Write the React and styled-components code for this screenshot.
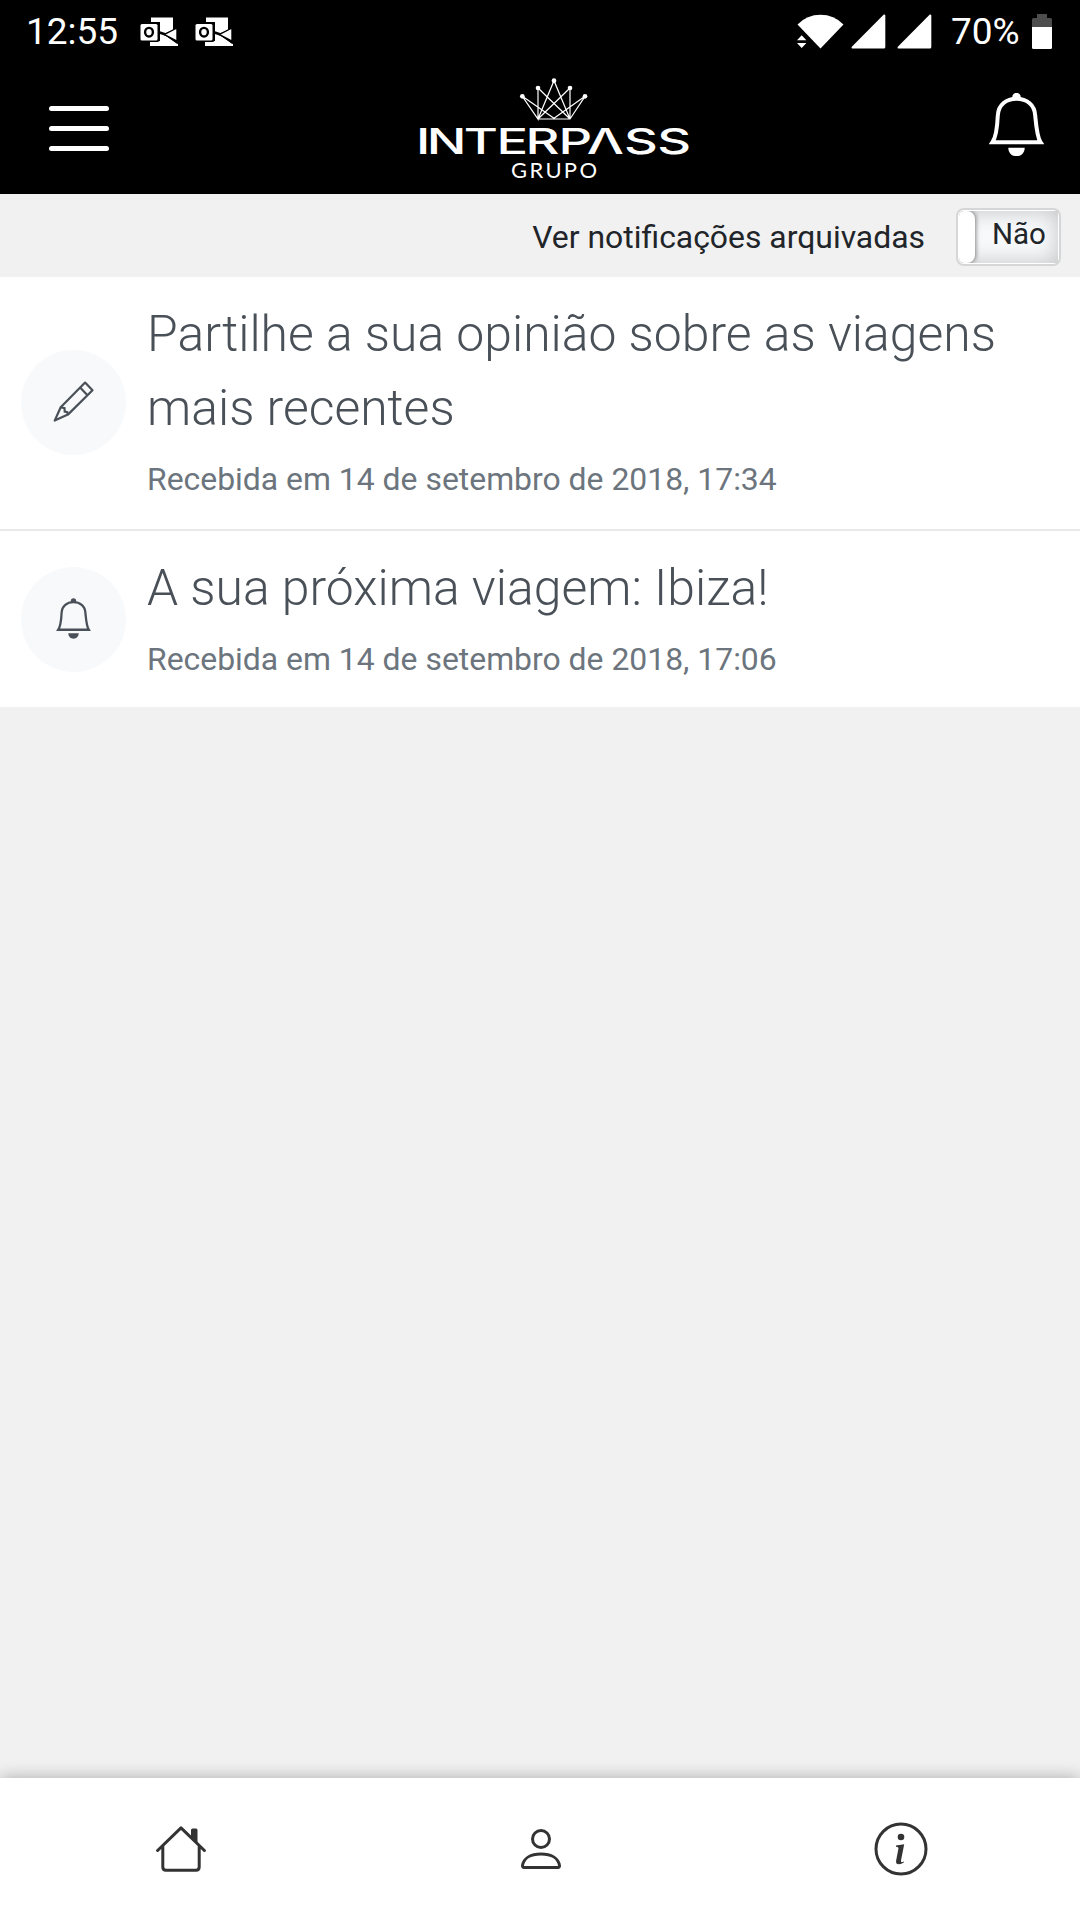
import styled, { createGlobalStyle } from 'styled-components'

const GlobalStyle = createGlobalStyle`
  * {
    box-sizing: border-box;
  }
  body {
    margin: 0;
    background: #f1f1f1;
    font-family: Roboto, "Liberation Sans", sans-serif;
    color: #212529;
  }
  svg {
    display: block;
    flex: none;
  }
`

const Screen = styled.div`
  display: flex;
  flex-direction: column;
  width: 1080px;
  height: 1920px;
  overflow: hidden;
  background: #f1f1f1;
`

const StatusBar = styled.div`
  display: flex;
  justify-content: space-between;
  height: 63px;
  padding: 0 28px 0 26px;
  background: #000;
  color: #fff;
`

const StatusGroup = styled.div`
  display: flex;
  align-items: center;
  height: 63px;
`

const StatusText = styled.span`
  width: ${props => props.$width}px;
  margin-left: ${props => props.$left || 0}px;
  font-size: 37px;
  line-height: 63px;
  white-space: nowrap;
`

const StatusIcon = styled.svg`
  margin-left: ${props => props.$left || 0}px;
`

const AppBar = styled.header`
  display: flex;
  justify-content: space-between;
  height: 131px;
  padding: 0 36px 0 48px;
  background: #000;
  color: #fff;
`

const MenuButton = styled.div`
  display: flex;
  flex-direction: column;
  gap: 15px;
  width: 61px;
  padding: 43px 0 0 0.5px;
`

const MenuLine = styled.span`
  height: 5px;
  border-radius: 3px;
  background: #fff;
`

const BellButton = styled.div`
  padding-top: 30px;
`

const Logo = styled.svg`
  margin-left: 32px;
`

const FilterBar = styled.div`
  display: flex;
  align-items: center;
  justify-content: flex-end;
  gap: 31px;
  height: 83px;
  padding-right: 19px;
  font-size: 31.9px;
`

const FilterLabel = styled.span`
  padding-top: 3px;
`

const Toggle = styled.div`
  display: flex;
  width: 105px;
  height: 58px;
  margin-top: 3px;
  padding: 1px;
  border: 2px solid #d5d6d8;
  border-radius: 8px;
  background: #fff;
`

const ToggleTrack = styled.div`
  display: flex;
  flex: 1;
  overflow: hidden;
  border-radius: 5px 0 0 5px;
  background: #f8f9fa;
  box-shadow: inset 0 0 22px rgba(0, 0, 0, 0.22);
`

const ToggleKnob = styled.span`
  width: 16px;
  border-radius: 5px 8px 8px 5px;
  background: #fff;
  box-shadow: 1px 0 4px rgba(0, 0, 0, 0.45);
`

const ToggleText = styled.span`
  padding-left: 17px;
  font-size: 29.5px;
  line-height: 47px;
`

const List = styled.main`
  display: flex;
  flex-direction: column;
  flex: 1;
`

const Avatar = styled.div`
  display: flex;
  flex: none;
  align-items: center;
  justify-content: center;
  width: 105px;
  height: 105px;
  padding-bottom: 2px;
  border-radius: 50%;
  background: #f8f9fb;
  color: #495057;
`

const ItemText = styled.div`
  padding-bottom: 4px;
`

const Item = styled.article`
  display: flex;
  align-items: center;
  gap: 21px;
  height: ${props => props.$height}px;
  padding-left: 21px;
  background: #fff;

  & + & {
    border-top: 2px solid #e9e9e9;
  }
  &:first-child ${Avatar} {
    margin-bottom: 1px;
  }
  &:first-child ${ItemText} {
    padding-bottom: 6px;
  }
`

const Title = styled.h2`
  width: 890px;
  margin: 0;
  font-size: 49.87px;
  font-weight: 300;
  line-height: 74px;
  color: #495057;
`

const Received = styled.p`
  margin: 11px 0 0;
  font-size: 31.9px;
  line-height: 47px;
  color: #6c757d;
`

const TabBar = styled.nav`
  display: grid;
  grid-template-columns: repeat(3, 1fr);
  height: 142px;
  background: #fff;
  box-shadow: 0 0 16px rgba(0, 0, 0, 0.3);
`

const Tab = styled.div`
  display: flex;
  align-items: center;
  justify-content: center;
  padding: 0 0 0 1px;
  color: #333;
`

function OutlookIcon({ left }) {
  return (
    <StatusIcon $left={left} width="38" height="30" viewBox="0 0 38 30">
      <path d="M11 0.5H33V13L23 17L38 27V29H10V24H20V5H11Z" fill="#fff" />
      <path d="M18 15L27 18L38 26" fill="none" stroke="#000" strokeWidth="2.6" />
      <path d="M24.5 17.5L37 11V24Z" fill="#fff" stroke="#000" strokeWidth="1.4" />
      <rect x="-1" y="5" width="21" height="20" rx="3" fill="#000" />
      <rect x="0.5" y="7" width="17" height="16.5" rx="1.5" fill="#fff" />
      <ellipse cx="9" cy="15.2" rx="3.9" ry="4.3" fill="none" stroke="#000" strokeWidth="2.4" />
    </StatusIcon>
  )
}

function WifiIcon() {
  return (
    <StatusIcon width="47" height="35" viewBox="0 0 47 35">
      <path d="M0.5 10.5Q10 0.8 23.5 0.8T46.5 10.5L23.5 34.5Z" fill="#fff" />
      <path d="M0 26.2L4.7 21.2L9.4 26.2ZM0 29L4.7 34L9.4 29Z" fill="#fff" />
    </StatusIcon>
  )
}

function SignalIcon({ left }) {
  return (
    <StatusIcon $left={left} width="35" height="35" viewBox="0 0 35 35">
      <path d="M32.8 0.5Q34.3 0 34.3 1.5V33Q34.3 34.5 32.8 34.5H1.2Q0 34.5 0.8 32.8Z" fill="#fff" />
    </StatusIcon>
  )
}

function BatteryIcon() {
  return (
    <StatusIcon width="20" height="35" viewBox="0 0 20 35">
      <path d="M0 13V5.5Q0 4 1.5 4H5V0H15V4H18.5Q20 4 20 5.5V13Z" fill="#4d4d4d" />
      <path d="M0 13H20V33.5Q20 35 18.5 35H1.5Q0 35 0 33.5Z" fill="#fff" />
    </StatusIcon>
  )
}

function BellIcon({ width, height, stroke }) {
  return (
    <svg width={width} height={height} viewBox="0 0 55 63">
      <path
        d="M3.5 49.2H51.5C48 44 47.3 34 46.2 22.5C45.6 11.5 37.5 5.8 27.5 5.8S9.4 11.5 8.8 22.5C8.3 34 7 44 3.5 49.2Z"
        fill="none"
        stroke="currentColor"
        strokeWidth={stroke}
      />
      <path d="M23.3 5.5V4A4.2 4.2 0 0 1 31.7 4V5.5ZM19.3 54.7H35.7C35.7 66 19.3 66 19.3 54.7Z" fill="currentColor" />
    </svg>
  )
}

function PencilIcon() {
  return (
    <svg width="41" height="42" viewBox="0 0 40 42" fill="none" stroke="currentColor" strokeWidth="2.2">
      <path d="M1.2 39.6L7.2 26.2L31.6 1.6L39 9.2L14.4 33.6Z" strokeLinejoin="round" />
      <path d="M26.6 6.6L34 14.2M7.2 26.2L11 27.2L11.2 30.6L13.8 31.2L14.4 33.6" />
    </svg>
  )
}

// Crown and wordmark share one drawing so their spacing stays fixed
function InterpassLogo() {
  return (
    <Logo width="310" height="131" viewBox="-10 0 310 131" fill="#fff" role="img" aria-label="INTERPASS GRUPO">
      <g transform="translate(-20 2) scale(0.33333)">
        <path
          d="M414 162H510L555 94L462 160L367 94L414 162V69L510 162L462 47L414 162L510 69V162"
          fill="none"
          stroke="#fff"
          strokeWidth="3.6"
        />
        <circle cx="367" cy="94" r="7" />
        <circle cx="414" cy="69" r="7" />
        <circle cx="462" cy="47" r="7" />
        <circle cx="510" cy="69" r="7" />
        <circle cx="555" cy="94" r="7" />
      </g>
      <text
        transform="scale(1.5 1)"
        x="-2.6 4.5 29.2 51 70.4 92.4 111.2 136 158.2"
        y="90.7"
        fontFamily="Inter"
        fontSize="35"
        fontWeight="500"
      >
        INTERPΛSS
      </text>
      <text x="91" y="115" fontFamily="Lato" fontSize="22" textLength="86">
        GRUPO
      </text>
    </Logo>
  )
}

function HomeIcon() {
  return (
    <svg width="50" height="46" viewBox="0 0 50 46">
      <path
        d="M1.6 24.5L25 1.8L48.4 24.5M6.8 20V41Q6.8 44.2 10 44.2H40Q43.2 44.2 43.2 41V20"
        fill="none"
        stroke="currentColor"
        strokeWidth="3"
        strokeLinecap="round"
        strokeLinejoin="round"
      />
      <path d="M35 11V4Q35 2.5 36.5 2.5H40Q41.5 2.5 41.5 4V17Z" fill="currentColor" />
    </svg>
  )
}

function PersonIcon() {
  return (
    <svg width="40" height="40" viewBox="0 0 40 40" fill="none" stroke="currentColor" strokeWidth="3">
      <circle cx="20" cy="10" r="8.5" />
      <path d="M3 38.4H37Q38.5 38.4 38.5 36.8C37.5 29 30 25 20 25S2.5 29 1.5 36.8Q1.5 38.4 3 38.4Z" />
    </svg>
  )
}

function InfoIcon() {
  return (
    <svg width="54" height="54" viewBox="0 0 54 54">
      <circle cx="27" cy="27" r="25" fill="none" stroke="currentColor" strokeWidth="3" />
      <circle cx="27" cy="15" r="3.3" fill="currentColor" />
      <path
        d="M22 23.4L30.2 22.2L27 38.5Q26.7 40.3 28 40.2L30.1 39.4L29.8 40.6Q27.4 42.2 25 42.2Q21.5 42.2 22.1 38.7L24.4 26.8Q24.8 24.8 22 24.7Z"
        fill="currentColor"
      />
    </svg>
  )
}

const notifications = [
  {
    title: 'Partilhe a sua opinião sobre as viagens mais recentes',
    received: 'Recebida em 14 de setembro de 2018, 17:34',
    icon: <PencilIcon />,
    height: 252,
  },
  {
    title: 'A sua próxima viagem: Ibiza!',
    received: 'Recebida em 14 de setembro de 2018, 17:06',
    icon: <BellIcon width="35" height="41" stroke="3.6" />,
    height: 178,
  },
]

export default function App() {
  return (
    <Screen>
      <GlobalStyle />
      <StatusBar>
        <StatusGroup>
          <StatusText $width={93}>12:55</StatusText>
          <OutlookIcon left={21} />
          <OutlookIcon left={17} />
        </StatusGroup>
        <StatusGroup>
          <WifiIcon />
          <SignalIcon left={7} />
          <SignalIcon left={11} />
          <StatusText $width={81} $left={19}>70%</StatusText>
          <BatteryIcon />
        </StatusGroup>
      </StatusBar>
      <AppBar>
        <MenuButton>
          <MenuLine />
          <MenuLine />
          <MenuLine />
        </MenuButton>
        <InterpassLogo />
        <BellButton>
          <BellIcon width="55" height="63" stroke="4" />
        </BellButton>
      </AppBar>
      <FilterBar>
        <FilterLabel>Ver notificações arquivadas</FilterLabel>
        <Toggle>
          <ToggleTrack>
            <ToggleKnob />
            <ToggleText>Não</ToggleText>
          </ToggleTrack>
        </Toggle>
      </FilterBar>
      <List>
        {notifications.map(item => (
          <Item key={item.title} $height={item.height}>
            <Avatar>{item.icon}</Avatar>
            <ItemText>
              <Title>{item.title}</Title>
              <Received>{item.received}</Received>
            </ItemText>
          </Item>
        ))}
      </List>
      <TabBar>
        <Tab><HomeIcon /></Tab>
        <Tab><PersonIcon /></Tab>
        <Tab><InfoIcon /></Tab>
      </TabBar>
    </Screen>
  )
}
